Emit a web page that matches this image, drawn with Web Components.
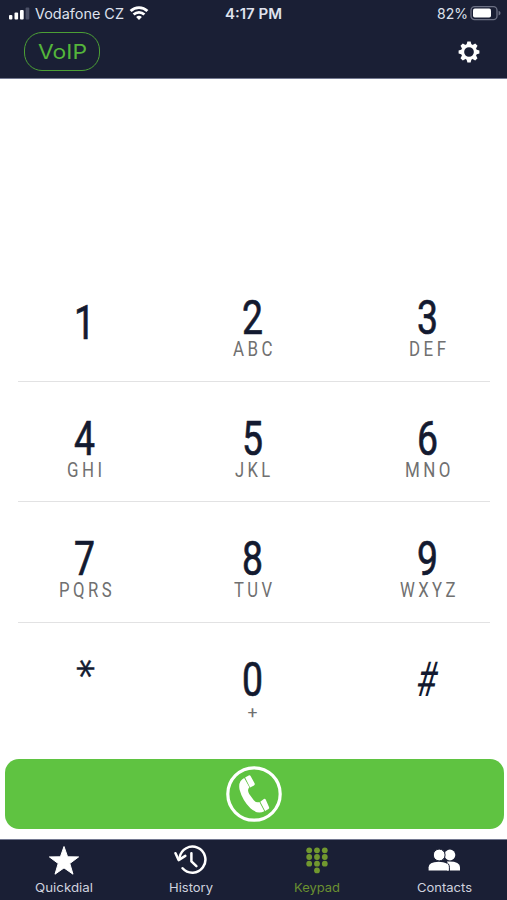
<!DOCTYPE html>
<html lang="en">
<head>
<meta charset="utf-8">
<title>Keypad</title>
<style>
  html, body { margin: 0; height: 100%; background: #fff; }
</style>
</head>
<body>
<dialer-app></dialer-app>
<script>
const define = (name, html, extra) => customElements.define(name, class extends HTMLElement {
  connectedCallback() {
    if (this.shadowRoot) return;
    this.attachShadow({ mode: 'open' }).innerHTML = typeof html === 'function' ? html(this) : html;
    if (extra) extra(this);
  }
});

// Text set on a fixed advance width, with its baseline at the bottom edge of the box.
define('fit-text', el => {
  const w = el.getAttribute('w'), s = el.getAttribute('size'), wt = el.getAttribute('weight') || 400;
  const ls = el.getAttribute('spacing') || 0, h = Math.ceil(s * 0.75);
  return `<style>
    :host { display: block; width: ${w}px; height: ${h}px; flex: none; }
    svg { display: block; overflow: visible; }
    text { fill: currentColor; stroke: currentColor; stroke-width: ${el.getAttribute('bold') || 0}px; font-size: ${s}px; font-weight: ${wt}; letter-spacing: ${ls}px; }
  </style>
  <svg width="${w}" height="${h}"><text x="0" y="${h}" textLength="${w}" lengthAdjust="spacingAndGlyphs">${el.getAttribute('text')}</text></svg>`;
});

define('status-bar', `<style>
    :host { display: grid; grid-template-columns: 1fr auto 1fr; height: 26px; color: #dfe2ee; font-family: Inter, sans-serif; }
    div { display: flex; align-items: flex-start; }
    .l { padding-left: 8px; } .r { justify-content: flex-end; padding-right: 5px; }
    fit-text { margin-top: 8px; }
    svg { display: block; flex: none; }
  </style>
  <div class="l">
    <svg width="27" height="26"><g fill="#fff"><rect x="1" y="15" width="3.4" height="4.5" rx="1"/><rect x="6.5" y="12.6" width="3.6" height="6.9" rx="1"/><rect x="12" y="10" width="3.7" height="9.5" rx="1"/></g><rect x="17.6" y="7.5" width="3.7" height="12" rx="1" fill="#4b5066"/></svg>
    <fit-text text="Vodafone CZ" size="14" w="89"></fit-text>
    <svg width="28" height="26" fill="none" stroke="#fff" stroke-width="2.8"><path d="M6.6 11.1a12 12 0 0 1 16.8 0"/><path d="M9.6 14.5a7.9 7.9 0 0 1 10.8 0"/><path d="M15 20l-2.9-3a4.3 4.3 0 0 1 5.8 0z" fill="#fff" stroke="none"/></svg>
  </div>
  <div><fit-text text="4:17 PM" size="14" weight="600" w="57"></fit-text></div>
  <div class="r">
    <fit-text text="82%" size="14" w="31"></fit-text>
    <svg width="34" height="26"><rect x="3" y="6.6" width="26" height="13" rx="3.6" fill="none" stroke="#6d7185" stroke-width="1.3"/><rect x="5" y="8.6" width="18" height="9" rx="1.8" fill="#fff"/><path d="M30.6 10.8v4.6q2-.7 2-2.3t-2-2.3z" fill="#6d7185"/></svg>
  </div>`);

define('app-header', `<style>
    :host { display: block; box-sizing: border-box; height: 79px; background: #1a1f35; border-bottom: 1px solid #747991; }
    nav { display: flex; justify-content: space-between; align-items: flex-start; padding: 6px 27px 0 24px; }
    .pill { box-sizing: border-box; width: 76px; height: 39px; border: 1.4px solid #4c9f35; border-radius: 18px; display: flex; justify-content: center; padding-top: 11px; color: #54b53b; font-family: Inter, sans-serif; }
    svg { display: block; margin-top: 9px; }
  </style>
  <status-bar></status-bar>
  <nav><div class="pill"><fit-text text="VoIP" size="20" w="49"></fit-text></div>
  <svg width="22" height="22" viewBox="-11 -11 22 22" id="gear"><circle r="6.4" fill="none" stroke="#fff" stroke-width="3.1"/></svg></nav>`,
  el => {
    const g = el.shadowRoot.getElementById('gear');
    for (let i = 0; i < 8; i++) {
      const p = document.createElementNS('http://www.w3.org/2000/svg', 'path');
      p.setAttribute('d', 'M-2.6-7L-1.6-10.4H1.6L2.6-7z');
      p.setAttribute('fill', '#fff');
      p.setAttribute('transform', `rotate(${i * 45})`);
      g.append(p);
    }
  });

define('dial-key', el => {
  const k = el.getAttribute('key'), sub = el.getAttribute('sub');
  let main;
  if (k === '*') main = '<fit-text class="star" text="*" size="38" w="19" bold="0.4"></fit-text>';
  else if (k === '#') main = '<fit-text class="hash" text="#" size="48" w="20.5"></fit-text>';
  else main = `<fit-text text="${k}" size="47.5" bold="0.7" w="21"></fit-text>`;
  return `<style>
    :host { display: flex; flex-direction: column; align-items: center; box-sizing: border-box; padding-top: ${k === '1' ? 42.3 : 37.3}px; color: #131a30; font-family: Roboto, sans-serif; }
    .sub { color: #707070; margin-top: 7px; }
    .plus { margin-top: 9px; }
    .star { font-family: "DejaVu Sans", sans-serif; margin-top: -2px; transform: rotate(90deg); transform-origin: 9.5px 10.5px; }
    .hash { transform: skewX(-9deg); }
  </style>${main}${sub ? `<fit-text class="sub" text="${sub}" size="19.5" spacing="4" w="${el.getAttribute('w')}" style="transform:translateX(2px)"></fit-text>`.replace(/class="sub" text="\+" size="19.5" spacing="4"(.*)2px/, 'class="sub plus" text="+" size="17"$1-0.5px') : ''}`;
});

define('key-pad', `<style>
    :host { display: block; padding: 182px 17px 0 18px; }
    .row { display: grid; grid-template-columns: 133px 203px 1fr; height: 119.6px; border-bottom: 1px solid #e2e2e3; }
    .row:last-child { border: 0; }
    .row > :nth-child(3) { padding-left: 10.5px; }
  </style>
  <div class="row"><dial-key key="1"></dial-key><dial-key key="2" sub="ABC" w="43"></dial-key><dial-key key="3" sub="DEF" w="40.5"></dial-key></div>
  <div class="row"><dial-key key="4" sub="GHI" w="38.5"></dial-key><dial-key key="5" sub="JKL" w="38.5"></dial-key><dial-key key="6" sub="MNO" w="49"></dial-key></div>
  <div class="row"><dial-key key="7" sub="PQRS" w="56"></dial-key><dial-key key="8" sub="TUV" w="41.5"></dial-key><dial-key key="9" sub="WXYZ" w="59"></dial-key></div>
  <div class="row"><dial-key key="*"></dial-key><dial-key key="0" sub="+" w="10"></dial-key><dial-key key="#"></dial-key></div>`);

define('call-button', `<style>
    :host { display: flex; justify-content: center; align-items: center; height: 70px; margin: 0 3.5px 10px 4.5px; border-radius: 14px; background: #5fc341; }
    svg { display: block; }
  </style>
  <svg width="58" height="58" viewBox="0 0 58 58"><circle cx="29" cy="29" r="26.2" fill="none" stroke="#fff" stroke-width="3.2"/>
  <g fill="#fff" transform="translate(0 .8)"><path d="M19.2 12.2L24.4 21.4Q21.8 23.8 24.2 28.2L28.8 34.4Q31.5 37.4 34.4 36.2L39.3 45.4Q32.5 49 25.4 42.5Q17.4 34.5 14.6 24Q12.8 15.3 19.2 12.2z"/><path d="M20.1 11.7l3.6-2q1.3-.6 2 .7l4 7.3q.5 1.2-.7 1.9l-3.9 2.1z"/><path d="M35.3 35.9l3.6-2.8q1-.7 1.8.5l3.4 7.8q.5 1.1-.6 1.8l-3.4 2.1z"/></g></svg>`);

const icons = {
  star: '<path fill="#fff" stroke="#fff" stroke-width="1" stroke-linejoin="round" d="M17 2.5l3.6 10.3 11 .1-8.8 6.6 3.2 10.7L17 23.9 8 30.2l3.2-10.7L2.4 12.9l11-.1z"/>',
  history: '<g fill="none" stroke="#fff" stroke-width="2.5" stroke-linecap="round" stroke-linejoin="round"><path d="M5.6 13.4A13 13 0 1 1 8.6 24.2"/><path d="M1.5 9.2l3.1 6.9 6.7-4.2"/><path d="M17.4 9.2v8.1l5 4.8"/></g>',
  pad: '<g fill="#71982f">' + [[0,0],[1,0],[2,0],[0,1],[1,1],[2,1],[0,2],[1,2],[2,2],[1,3]].map(([x, y]) => `<circle cx="${9.2 + x * 7.8}" cy="${6.3 + y * 6.7}" r="2.9"/>`).join('') + '</g>',
  people: '<g fill="#fff"><circle cx="22.9" cy="11" r="5.4"/><path d="M20 26.6v-9q13-.6 13 5.6v3.4z"/><g stroke="#1a1f35" stroke-width="1"><circle cx="12.2" cy="11" r="5.9"/><path stroke="none" d="M1.6 26.6v-3.4Q1.6 18 11.7 17.7 21.8 18 21.8 23.2v3.4z"/><path fill="none" d="M18.2 17.6Q22.4 19.3 22.4 23.2v3.9"/></g></g>'
};
define('tab-item', el => `<style>
    :host { display: flex; flex-direction: column; align-items: center; color: ${el.hasAttribute('active') ? '#6a9031' : '#cfd2df'}; font-family: Inter, sans-serif; padding-top: 4px; }
    svg { display: block; margin-bottom: 5px; }
  </style><svg width="34" height="34">${icons[el.getAttribute('icon')]}</svg>
  <fit-text text="${el.getAttribute('label')}" size="12" w="${el.getAttribute('w')}"></fit-text>`);

define('tab-bar', `<style>
    :host { display: grid; grid-template-columns: repeat(4, 126.6px); height: 61px; padding-left: 1px; background: #1a1f35; border-top: 1px solid #747991; box-sizing: border-box; }
  </style>
  <tab-item icon="star" label="Quickdial" w="58"></tab-item><tab-item icon="history" label="History" w="44"></tab-item>
  <tab-item icon="pad" label="Keypad" w="46" active></tab-item><tab-item icon="people" label="Contacts" w="55"></tab-item>`);

define('dialer-app', `<style>
    :host { display: flex; flex-direction: column; width: 507px; height: 900px; overflow: hidden; background: #fff; }
    key-pad { flex: 1; min-height: 0; }
  </style><app-header></app-header><key-pad></key-pad><call-button></call-button><tab-bar></tab-bar>`);
</script>
</body>
</html>
